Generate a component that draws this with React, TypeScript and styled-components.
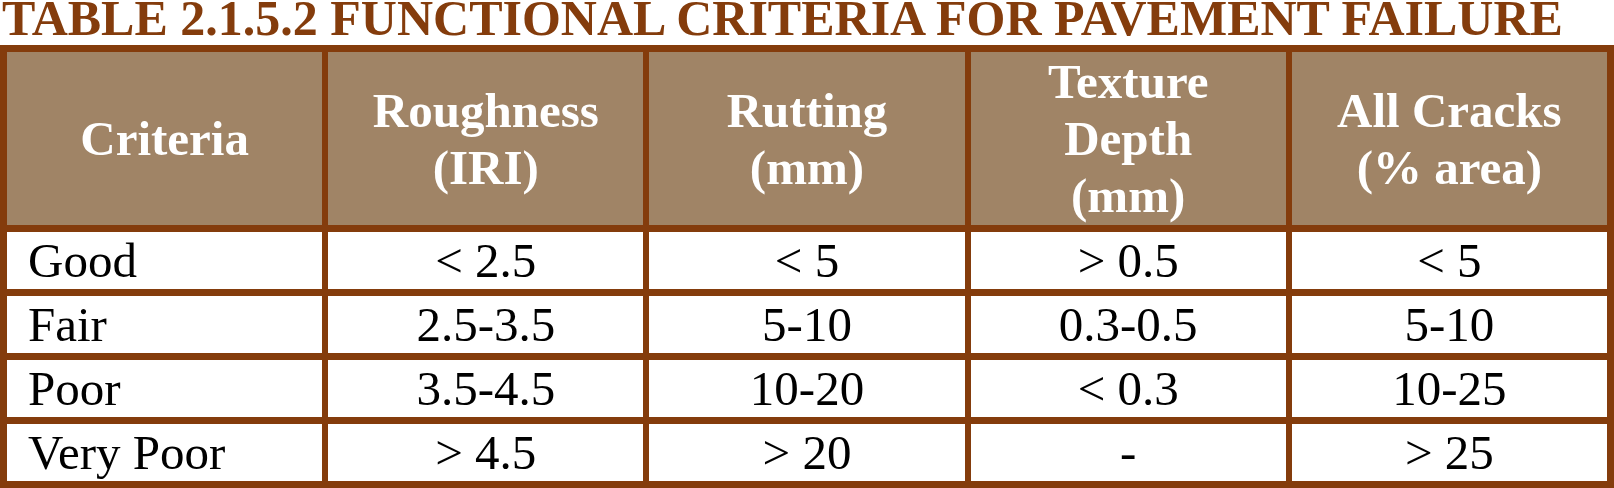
import React from 'react';
import styled, { createGlobalStyle } from 'styled-components';

const rows = [
  ['Good', '< 2.5', '< 5', '> 0.5', '< 5'],
  ['Fair', '2.5-3.5', '5-10', '0.3-0.5', '5-10'],
  ['Poor', '3.5-4.5', '10-20', '< 0.3', '10-25'],
  ['Very Poor', '> 4.5', '> 20', '-', '> 25'],
];

const headers = [
  ['Criteria'],
  ['Roughness', '(IRI)'],
  ['Rutting', '(mm)'],
  ['Texture', 'Depth', '(mm)'],
  ['All Cracks', '(% area)'],
];

const App = () => {
  return (
    <>
      <GlobalStyle />
      <Page>
        <Title>TABLE 2.1.5.2 FUNCTIONAL CRITERIA FOR PAVEMENT FAILURE</Title>
        <Table>
          {headers.map((lines, i) => (
            <HeadCell key={i}>
              {lines.map((line) => (
                <span key={line}>{line}</span>
              ))}
            </HeadCell>
          ))}
          {rows.map((row) =>
            row.map((value, i) => (
              <Cell key={row[0] + i} $first={i === 0}>
                {value}
              </Cell>
            ))
          )}
        </Table>
      </Page>
    </>
  );
};

const GlobalStyle = createGlobalStyle`
  html, body {
    margin: 0;
    padding: 0;
    background: #ffffff;
  }
`;

const Page = styled.div`
  width: 1614px;
  font-family: 'Liberation Serif', 'Times New Roman', serif;
`;

const Title = styled.h1`
  margin: 0 0 9px 0;
  padding-left: 2px;
  height: 36px;
  font-size: 50px;
  line-height: 36px;
  font-weight: 700;
  color: #843c0c;
  white-space: nowrap;
`;

const Table = styled.div`
  display: grid;
  grid-template-columns: repeat(5, 1fr);
  grid-template-rows: 173px repeat(4, 57px);
  gap: 7px 6px;
  padding: 7px;
  background: #843c0c;
`;

const HeadCell = styled.div`
  display: flex;
  flex-direction: column;
  justify-content: center;
  align-items: center;
  background: #a08466;
  color: #ffffff;
  font-size: 49px;
  font-weight: 700;
  line-height: 57px;
  text-align: center;
`;

const Cell = styled.div<{ $first?: boolean }>`
  display: flex;
  align-items: center;
  justify-content: ${(p) => (p.$first ? 'flex-start' : 'center')};
  padding-left: ${(p) => (p.$first ? '21px' : '0')};
  background: #ffffff;
  color: #000000;
  font-size: 49px;
  line-height: 57px;
  white-space: nowrap;
`;

export default App;
